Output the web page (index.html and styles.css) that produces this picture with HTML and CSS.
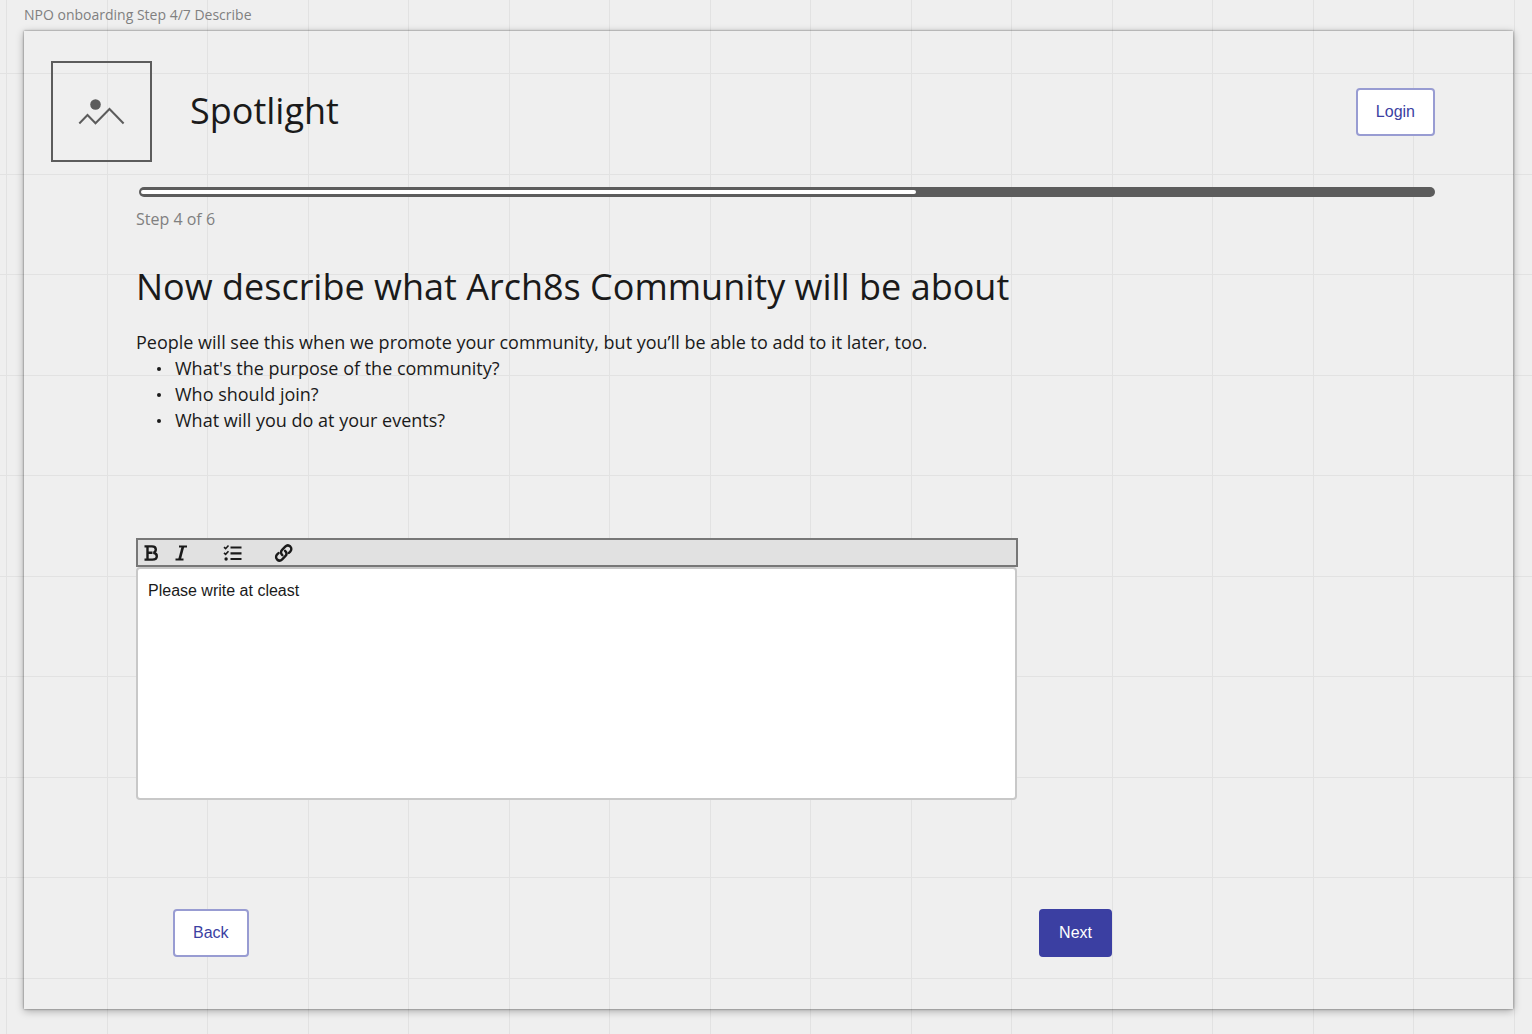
FILE: index.html
```html
<!DOCTYPE html>
<html lang="en">
<head>
<meta charset="utf-8">
<meta name="viewport" content="width=device-width, initial-scale=1">
<title>NPO onboarding Step 4/7 Describe</title>
<link rel="stylesheet" href="styles.css">
</head>
<body>
<div class="board">
  <div class="frame-label">NPO onboarding Step 4/7 Describe</div>
  <div class="frame">
    <header class="header">
      <svg class="logo" viewBox="0 0 101 101" role="img" aria-label="Logo">
        <rect x="1" y="1" width="99" height="99" fill="none" stroke="#5c5c5c" stroke-width="2"/>
        <circle cx="44.500" cy="43.500" r="5.300" fill="#5c5c5c"/>
        <path d="M28.300 62.500 36.500 54 44.500 62.300 58.500 48 72.600 62.500" fill="none" stroke="#5c5c5c" stroke-width="2"/>
      </svg>
      <div class="brand">Spotlight</div>
      <button class="btn" type="button">Login</button>
    </header>
    <main class="content">
      <progress class="progress" id="progress" max="100" value="60"></progress>
      <label class="step" for="progress">Step 4 of 6</label>
      <h1 class="title">Now describe what Arch8s Community will be about</h1>
      <p class="intro">People will see this when we promote your community, but you’ll be able to add to it later, too.</p>
      <ul class="questions">
        <li>What's the purpose of the community?</li>
        <li>Who should join?</li>
        <li>What will you do at your events?</li>
      </ul>
      <div class="editor">
        <div class="toolbar" role="toolbar" aria-label="Formatting">
          <button class="tool" type="button" aria-label="Bold">
            <svg viewBox="0 0 20 20"><path d="M3.500 3.400H11Q14.800 3.400 14.800 6.600 14.800 9.200 12.400 9.800 15.800 10.400 15.800 13.200 15.800 16.600 11.300 16.600H3.500M6.500 3.400V16.600M6.500 9.800H11.500" fill="none" stroke="#1a1a1a" stroke-width="2.400"/></svg>
          </button>
          <button class="tool tool-italic" type="button" aria-label="Italic">
            <svg viewBox="0 0 20 20"><path d="M8 3.400H16M4.500 16.600H12.500" fill="none" stroke="#1a1a1a" stroke-width="2"/><path d="M12 3.400 8.500 16.600" fill="none" stroke="#1a1a1a" stroke-width="2.600"/></svg>
          </button>
          <button class="tool tool-list" type="button" aria-label="List">
            <svg viewBox="0 0 20 20"><path d="M7.500 4.500H18.500M7.500 10.300H18.500M7.500 16H18.500" fill="none" stroke="#1a1a1a" stroke-width="2.200"/><path d="M1 4.200 2.600 5.700 5.500 2.500M1 9.900 2.600 11.400 5.500 8.200" fill="none" stroke="#1a1a1a" stroke-width="1.600"/><circle cx="3.100" cy="16" r="1.700" fill="#1a1a1a"/></svg>
          </button>
          <button class="tool tool-link" type="button" aria-label="Link">
            <svg viewBox="0 0 20 20"><g fill="none" stroke="#1a1a1a" stroke-width="2.400" stroke-linecap="round"><path d="M8.300 12.200C6.500 10.400 6.700 8.200 8.100 6.800L11.200 3.700C12.700 2.200 14.900 2.200 16.300 3.500 17.700 4.900 17.700 7.100 16.200 8.600L14.800 10"/><path d="M11.100 7.800C12.900 9.600 12.700 11.800 11.300 13.200L8.200 16.300C6.700 17.800 4.500 17.800 3.100 16.500 1.700 15.100 1.700 12.900 3.200 11.400L4.600 10"/></g></svg>
          </button>
        </div>
        <textarea class="text" aria-label="Community description">Please write at cleast</textarea>
      </div>
      <div class="actions">
        <button class="btn" type="button">Back</button>
        <button class="btn btn-primary" type="button">Next</button>
      </div>
    </main>
  </div>
</div>
</body>
</html>
```
FILE: styles.css
```css
* {
  box-sizing: border-box;
}

body {
  margin: 0;
  background-color: #efefef;
  color: #1a1a1a;
  font-family: "Open Sans", "Noto Sans", sans-serif;
}

/* Canvas grid */
.board {
  display: flex;
  flex-direction: column;
  min-height: 100vh;
  padding: 5px 19px 25px 24px;
  background-image:
    linear-gradient(90deg, #e2e2e2 1px, transparent 1px),
    linear-gradient(90deg, #e2e2e2 1px, transparent 1px),
    linear-gradient(#e2e2e2 1px, transparent 1px),
    linear-gradient(#e2e2e2 1px, transparent 1px);
  background-size: 201px 201px;
  background-position: 6px 0, 107px 0, 0 73px, 0 174px;
}

.frame-label {
  height: 26px;
  color: #808080;
  font-size: 14px;
  line-height: 20px;
}

.frame {
  flex: 1;
  padding: 30px 78px 52px 27px;
  box-shadow: 0 0 2px rgba(0, 0, 0, 0.5), 0 2px 8px rgba(0, 0, 0, 0.3);
}

.header {
  display: flex;
  align-items: center;
  padding-bottom: 1px;
}

.logo {
  width: 101px;
  height: 101px;
}

.brand {
  flex: 1;
  margin-left: 38px;
  padding-bottom: 2px;
  font-size: 36px;
  line-height: 50px;
}

.btn {
  height: 48px;
  padding: 0 18px;
  border: 2px solid #989cd2;
  border-radius: 4px;
  background: #fff;
  color: #3b3fa2;
  font: 16px "Liberation Sans", Arial, sans-serif;
}

.btn-primary {
  border-color: #3b3fa2;
  background: #3b3fa2;
  color: #fff;
}

.content {
  display: flex;
  flex-direction: column;
  padding: 24px 0 0 85px;
}

.progress {
  appearance: none;
  width: calc(100% - 3px);
  height: 10px;
  margin-left: 3px;
  padding: 3px 2px;
  border: 0;
  border-radius: 5px;
  background: #5c5c5c;
}

.progress::-webkit-progress-bar {
  background: transparent;
}

.progress::-webkit-progress-value {
  border-radius: 2px;
  background: #fff;
}

.step {
  margin-top: 11px;
  color: #808080;
  font-size: 16px;
  line-height: 22px;
}

.title {
  margin: 32px 0 17px;
  font-size: 36px;
  font-weight: 400;
  line-height: 50px;
}

.intro,
.questions {
  margin: 0;
  font-size: 18px;
  line-height: 26px;
}

.questions {
  padding: 0;
  list-style: none;
}

.questions li {
  display: flex;
  align-items: center;
  gap: 14px;
  padding-left: 21px;
}

.questions li::before {
  width: 4px;
  height: 4px;
  margin-top: 2px;
  border-radius: 50%;
  background: #1a1a1a;
  content: "";
}

.editor {
  display: flex;
  flex-direction: column;
  max-width: 882px;
  margin-top: 105px;
}

.toolbar {
  display: flex;
  align-items: center;
  height: 29px;
  padding: 0 3px;
  border: 2px solid #777;
  background: #e1e1e1;
}

.tool {
  width: 20px;
  height: 20px;
  padding: 0;
  border: 0;
  background: none;
}

.tool svg {
  display: block;
}

.tool-italic {
  margin-left: 10px;
}

.tool-list {
  margin-left: 32px;
}

.tool-link {
  margin-left: 31px;
}

.text {
  height: 233px;
  margin-right: 1px;
  padding: 12px 10px;
  border: 2px solid #c8c8c8;
  border-radius: 4px;
  background: #fff;
  color: #1a1a1a;
  font: 16px/20px "Liberation Sans", Arial, sans-serif;
  resize: none;
}

.actions {
  display: flex;
  justify-content: space-between;
  max-width: 976px;
  margin-top: 109px;
  padding-left: 37px;
}
```
